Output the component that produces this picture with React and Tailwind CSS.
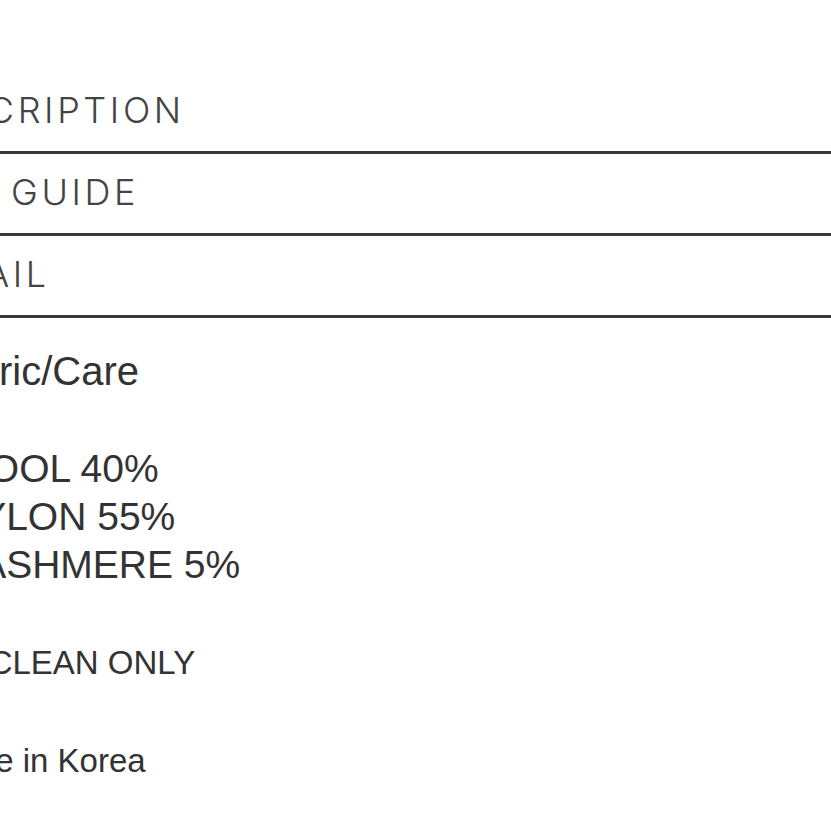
const tabs = ['DESCRIPTION', 'SIZE GUIDE', 'DETAIL']

export default function App() {
  return (
    <div className="h-[831px] w-[831px] overflow-hidden bg-white pt-[72px]">
      <div className="ml-[-93px]">
        {tabs.map((tab) => (
          <div
            key={tab}
            className="flex h-[82px] items-center border-b-[3px] border-[#3a3a3a] pb-[4px]"
          >
            <span className="whitespace-nowrap font-['Inter',sans-serif] text-[36px] font-light tracking-[0.1em] text-[#444]">
              {tab}
            </span>
          </div>
        ))}
      </div>

      <div className="font-['Liberation_Sans',Arial,sans-serif] whitespace-nowrap text-[#333]">
        <p className="ml-[-70px] mt-[29px] text-[40px] leading-[48px]">Fabric/Care</p>
        <div className="ml-[-48px] mt-[50px] text-[39px] leading-[48px]">
          <p>WOOL 40%</p>
          <p>NYLON 55%</p>
          <p>CASHMERE 5%</p>
        </div>
        <p className="ml-[-89px] mt-[54px] text-[33px] leading-[40px]">DRY CLEAN ONLY</p>
        <p className="ml-[-69px] mt-[58px] text-[33px] leading-[40px]">Made in Korea</p>
      </div>
    </div>
  )
}
